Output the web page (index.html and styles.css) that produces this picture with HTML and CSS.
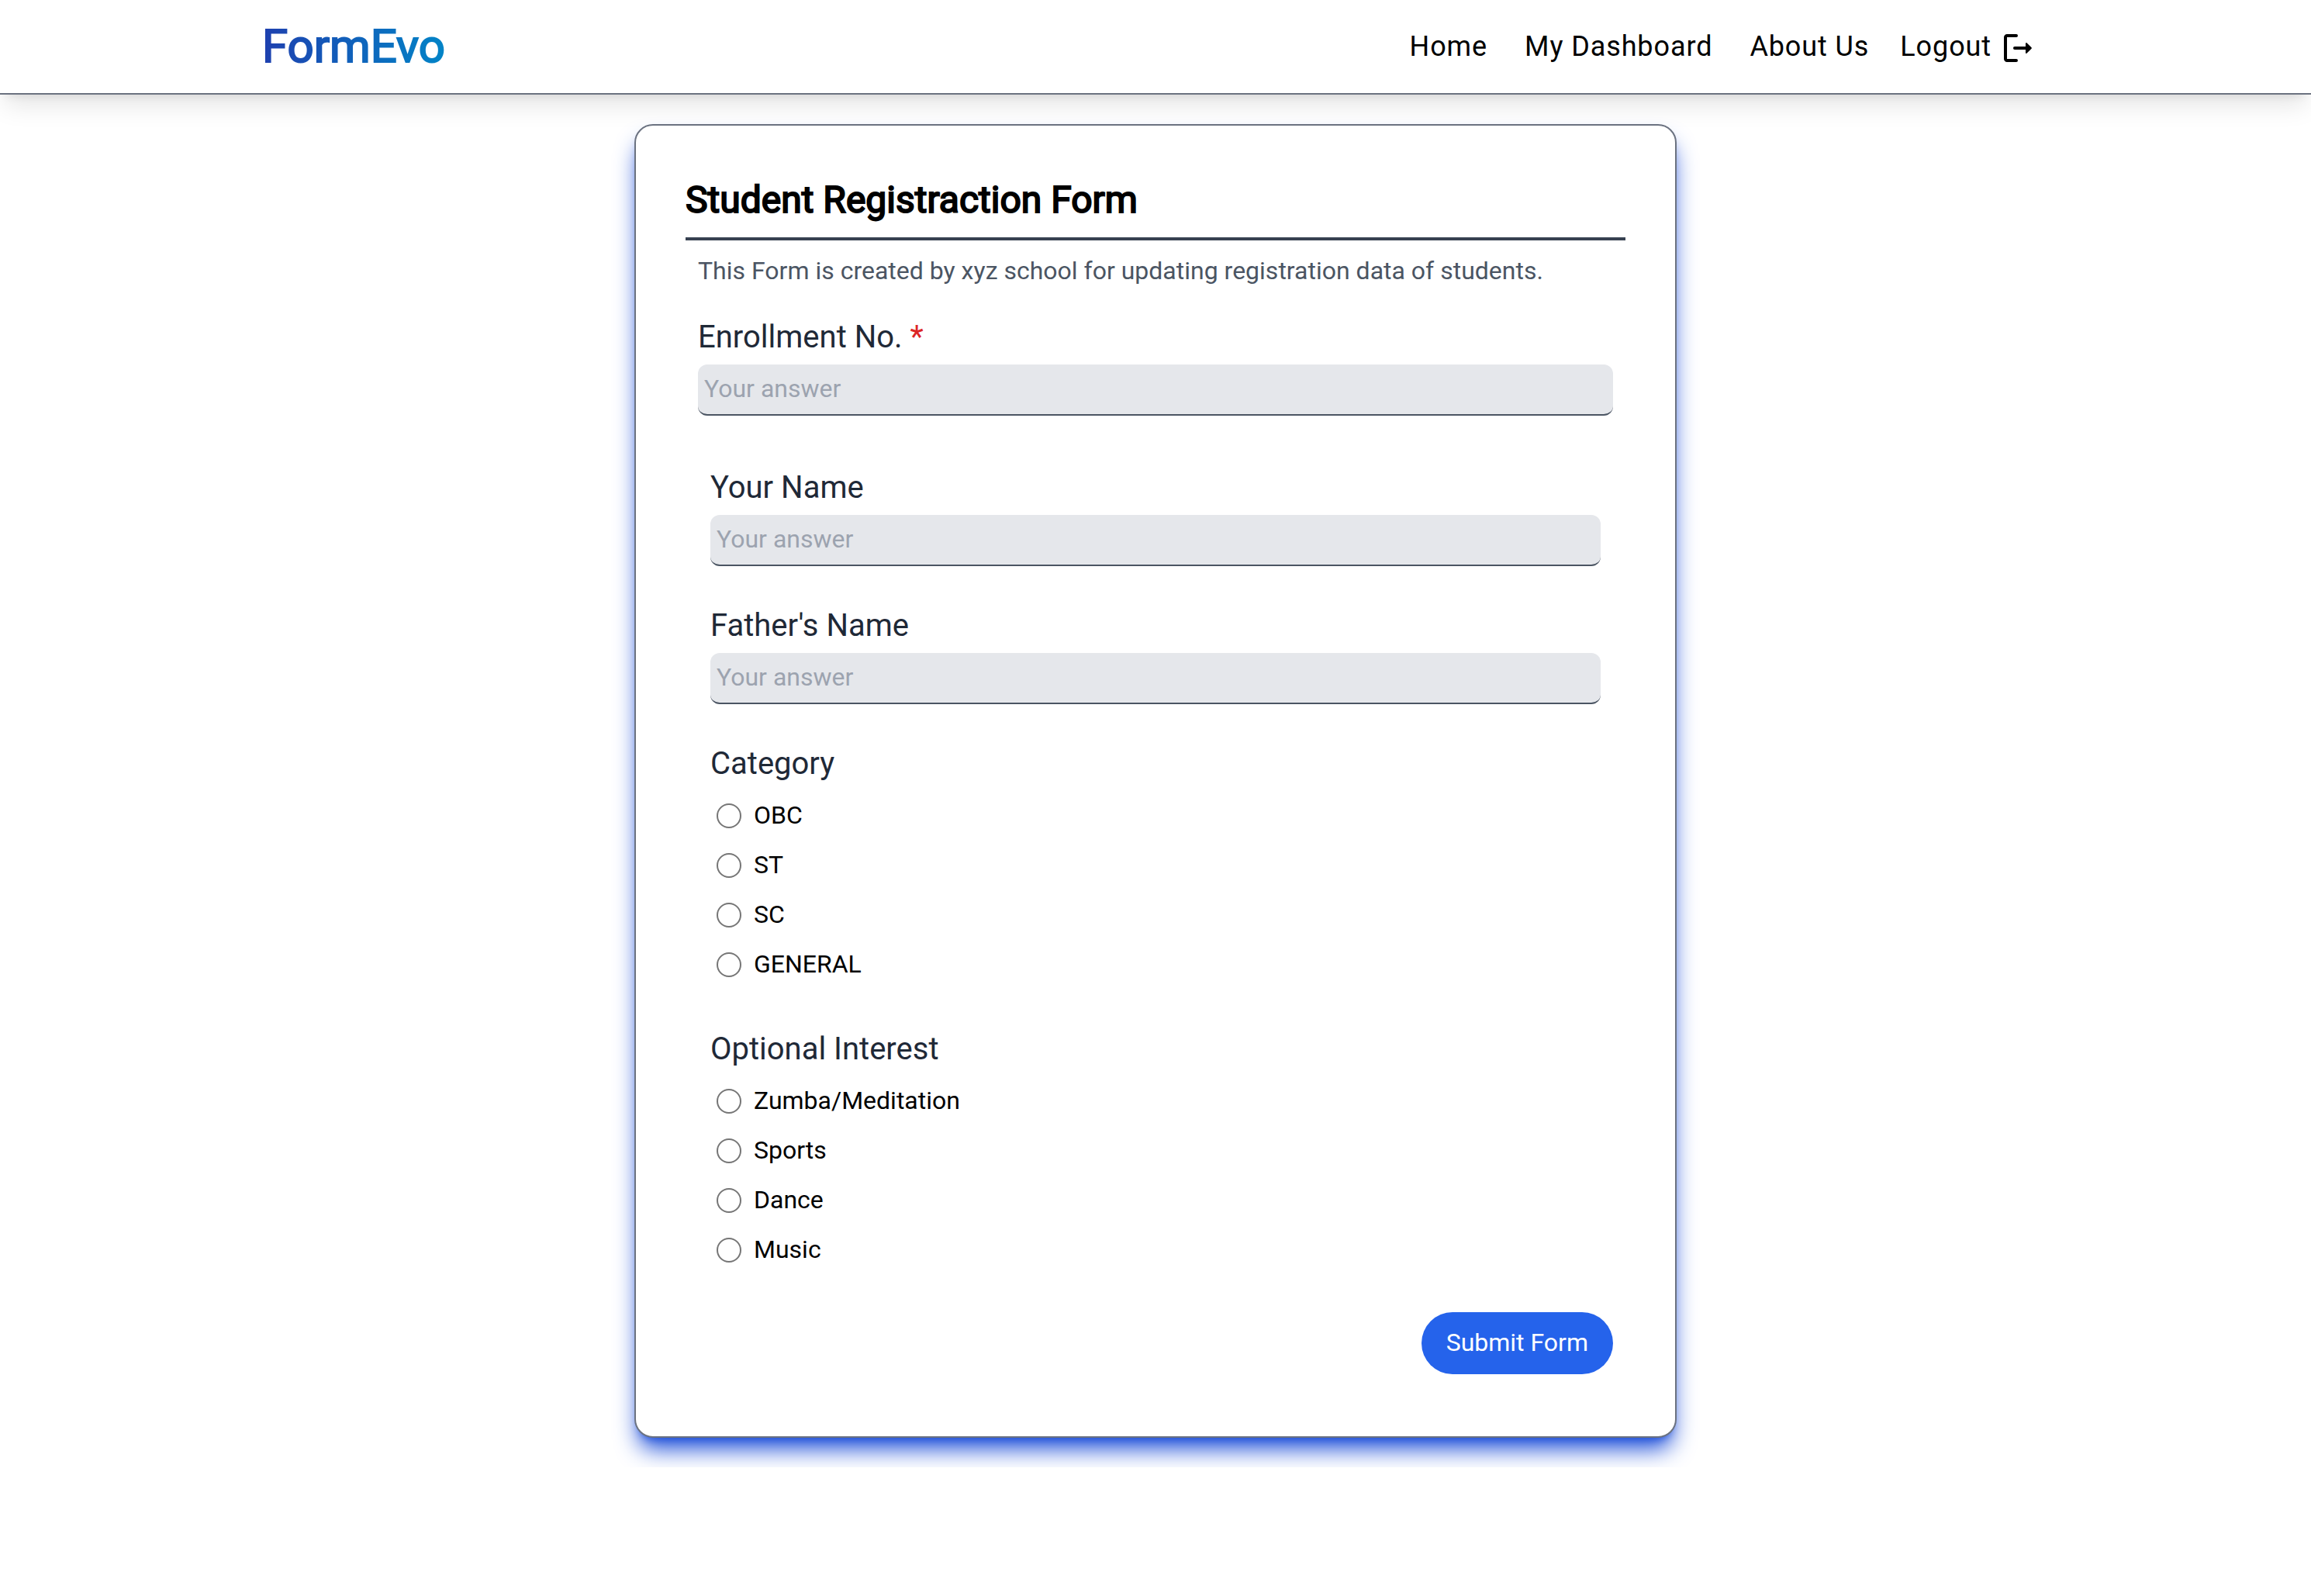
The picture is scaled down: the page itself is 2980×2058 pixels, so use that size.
FILE: index.html
```html
<!DOCTYPE html>
<html lang="en">
<head>
  <meta charset="utf-8">
  <meta name="viewport" content="width=device-width, initial-scale=1">
  <title>FormEvo</title>
  <link rel="stylesheet" href="styles.css">
</head>
<body>
  <header class="site-header">
    <div class="header-inner">
      <a class="logo" href="#">FormEvo</a>
      <nav class="nav">
        <a class="nav-link" href="#">Home</a>
        <a class="nav-link" href="#">My Dashboard</a>
        <a class="nav-link" href="#">About Us</a>
        <button class="logout" type="button">Logout
          <svg class="logout-icon" viewBox="0 0 24 24" aria-hidden="true">
            <path fill="currentColor" d="M5 3h6a1 1 0 0 1 0 2H5v14h6a1 1 0 0 1 0 2H5c-1.100 0-2-.9-2-2V5c0-1.100.9-2 2-2zM20.800 11.650l-2.950-2.950a.501.501 0 0 0-.860.350V11h-7a1 1 0 0 0 0 2h7v1.950c0 .450.540.670.850.350l2.950-2.950c.200-.190.200-.510.010-.700z"/>
          </svg>
        </button>
      </nav>
    </div>
  </header>

  <main class="page">
    <form class="card">
      <h1 class="card-title">Student Registraction Form</h1>
      <div class="card-body">
        <p class="description">This Form is created by xyz school for updating registration data of students.</p>

        <div class="field">
          <label class="label" for="enrollment">Enrollment No. <span class="required">*</span></label>
          <input class="input" id="enrollment" type="text" placeholder="Your answer">
        </div>

        <div class="questions">
          <div class="field">
            <label class="label" for="name">Your Name</label>
            <input class="input" id="name" type="text" placeholder="Your answer">
          </div>
          <div class="field">
            <label class="label" for="father">Father's Name</label>
            <input class="input" id="father" type="text" placeholder="Your answer">
          </div>
          <fieldset class="field">
            <legend class="label">Category</legend>
            <label class="option"><input class="radio" type="radio" name="category"><span>OBC</span></label>
            <label class="option"><input class="radio" type="radio" name="category"><span>ST</span></label>
            <label class="option"><input class="radio" type="radio" name="category"><span>SC</span></label>
            <label class="option"><input class="radio" type="radio" name="category"><span>GENERAL</span></label>
          </fieldset>
          <fieldset class="field">
            <legend class="label">Optional Interest</legend>
            <label class="option"><input class="radio" type="radio" name="interest"><span>Zumba/Meditation</span></label>
            <label class="option"><input class="radio" type="radio" name="interest"><span>Sports</span></label>
            <label class="option"><input class="radio" type="radio" name="interest"><span>Dance</span></label>
            <label class="option"><input class="radio" type="radio" name="interest"><span>Music</span></label>
          </fieldset>
        </div>

        <button class="submit" type="submit">Submit Form</button>
      </div>
    </form>
  </main>
</body>
</html>
```
FILE: styles.css
```css
* {
  box-sizing: border-box;
  margin: 0;
  padding: 0;
}

body {
  background: #fff;
  color: #000;
  font-family: Roboto, "Liberation Sans", sans-serif;
  font-size: 32px;
  line-height: 48px;
}

button,
input {
  font: inherit;
  color: inherit;
}

/* Header */
.site-header {
  background: #fff;
  border-bottom: 2px solid #6b7280;
  box-shadow: 0 20px 30px -6px rgba(0, 0, 0, 0.1), 0 8px 12px -8px rgba(0, 0, 0, 0.1);
}

.header-inner {
  display: flex;
  align-items: center;
  justify-content: space-between;
  max-width: 2304px;
  margin: 0 auto;
  padding: 24px 16px 24px 0;
}

.logo {
  background: linear-gradient(to right, #1e40af, #0284c7);
  background-clip: text;
  -webkit-background-clip: text;
  color: transparent;
  -webkit-text-stroke: 2px transparent;
  font-size: 60px;
  line-height: 72px;
  text-decoration: none;
}

.nav {
  display: flex;
  align-items: center;
  gap: 48px;
  font-size: 36px;
  line-height: 56px;
  letter-spacing: 0.025em;
}

.nav-link {
  color: inherit;
  text-decoration: none;
}

.logout {
  display: flex;
  align-items: center;
  gap: 10px;
  margin-left: -8px;
  border: 0;
  background: none;
  letter-spacing: inherit;
  cursor: pointer;
}

.logout-icon {
  width: 48px;
  height: 48px;
  margin-top: 4px;
}

/* Form card */
.page {
  padding: 38px 32px;
}

.card {
  position: relative;
  max-width: 1344px;
  margin: 0 auto;
  padding: 64px;
  background: #fff;
  border: 2px solid #6b7280;
  border-radius: 24px;
  box-shadow: 0 20px 30px -6px #1d4ed8, 0 8px 12px -8px #1d4ed8;
}

.card-title {
  padding-bottom: 16px;
  border-bottom: 4px solid #374151;
  font-size: 48px;
  font-weight: 400;
  line-height: 64px;
  -webkit-text-stroke: 2px #000;
}

.card-body {
  display: flex;
  flex-direction: column;
  padding: 16px;
}

.description {
  margin-bottom: 34px;
  color: #4b5563;
  line-height: 46px;
}

.questions {
  display: flex;
  flex-direction: column;
  gap: 48px;
  padding: 64px 16px 48px;
}

.field {
  border: 0;
}

.label {
  display: block;
  margin-bottom: 6px;
  color: #1f2937;
  font-size: 40px;
  line-height: 58px;
}

.required {
  color: #dc2626;
}

.input {
  display: block;
  width: 100%;
  height: 66px;
  padding: 7px 8px 9px;
  border: 0;
  border-bottom: 2px solid #4b5563;
  border-radius: 12px;
  background: #e5e7eb;
  line-height: 48px;
}

.input::placeholder {
  color: #9ca3af;
}

.option {
  display: flex;
  align-items: center;
  gap: 16px;
  padding: 7px 8px 9px;
}

.radio {
  appearance: none;
  width: 32px;
  height: 32px;
  margin-top: 2px;
  border: 2px solid #767676;
  border-radius: 50%;
  background: #fff;
}

.radio:checked {
  border: 10px solid #2563eb;
}

.submit {
  align-self: flex-end;
  padding: 15px 32px 17px;
  border: 0;
  border-radius: 40px;
  background: #2563eb;
  color: #fff;
  cursor: pointer;
}
```
